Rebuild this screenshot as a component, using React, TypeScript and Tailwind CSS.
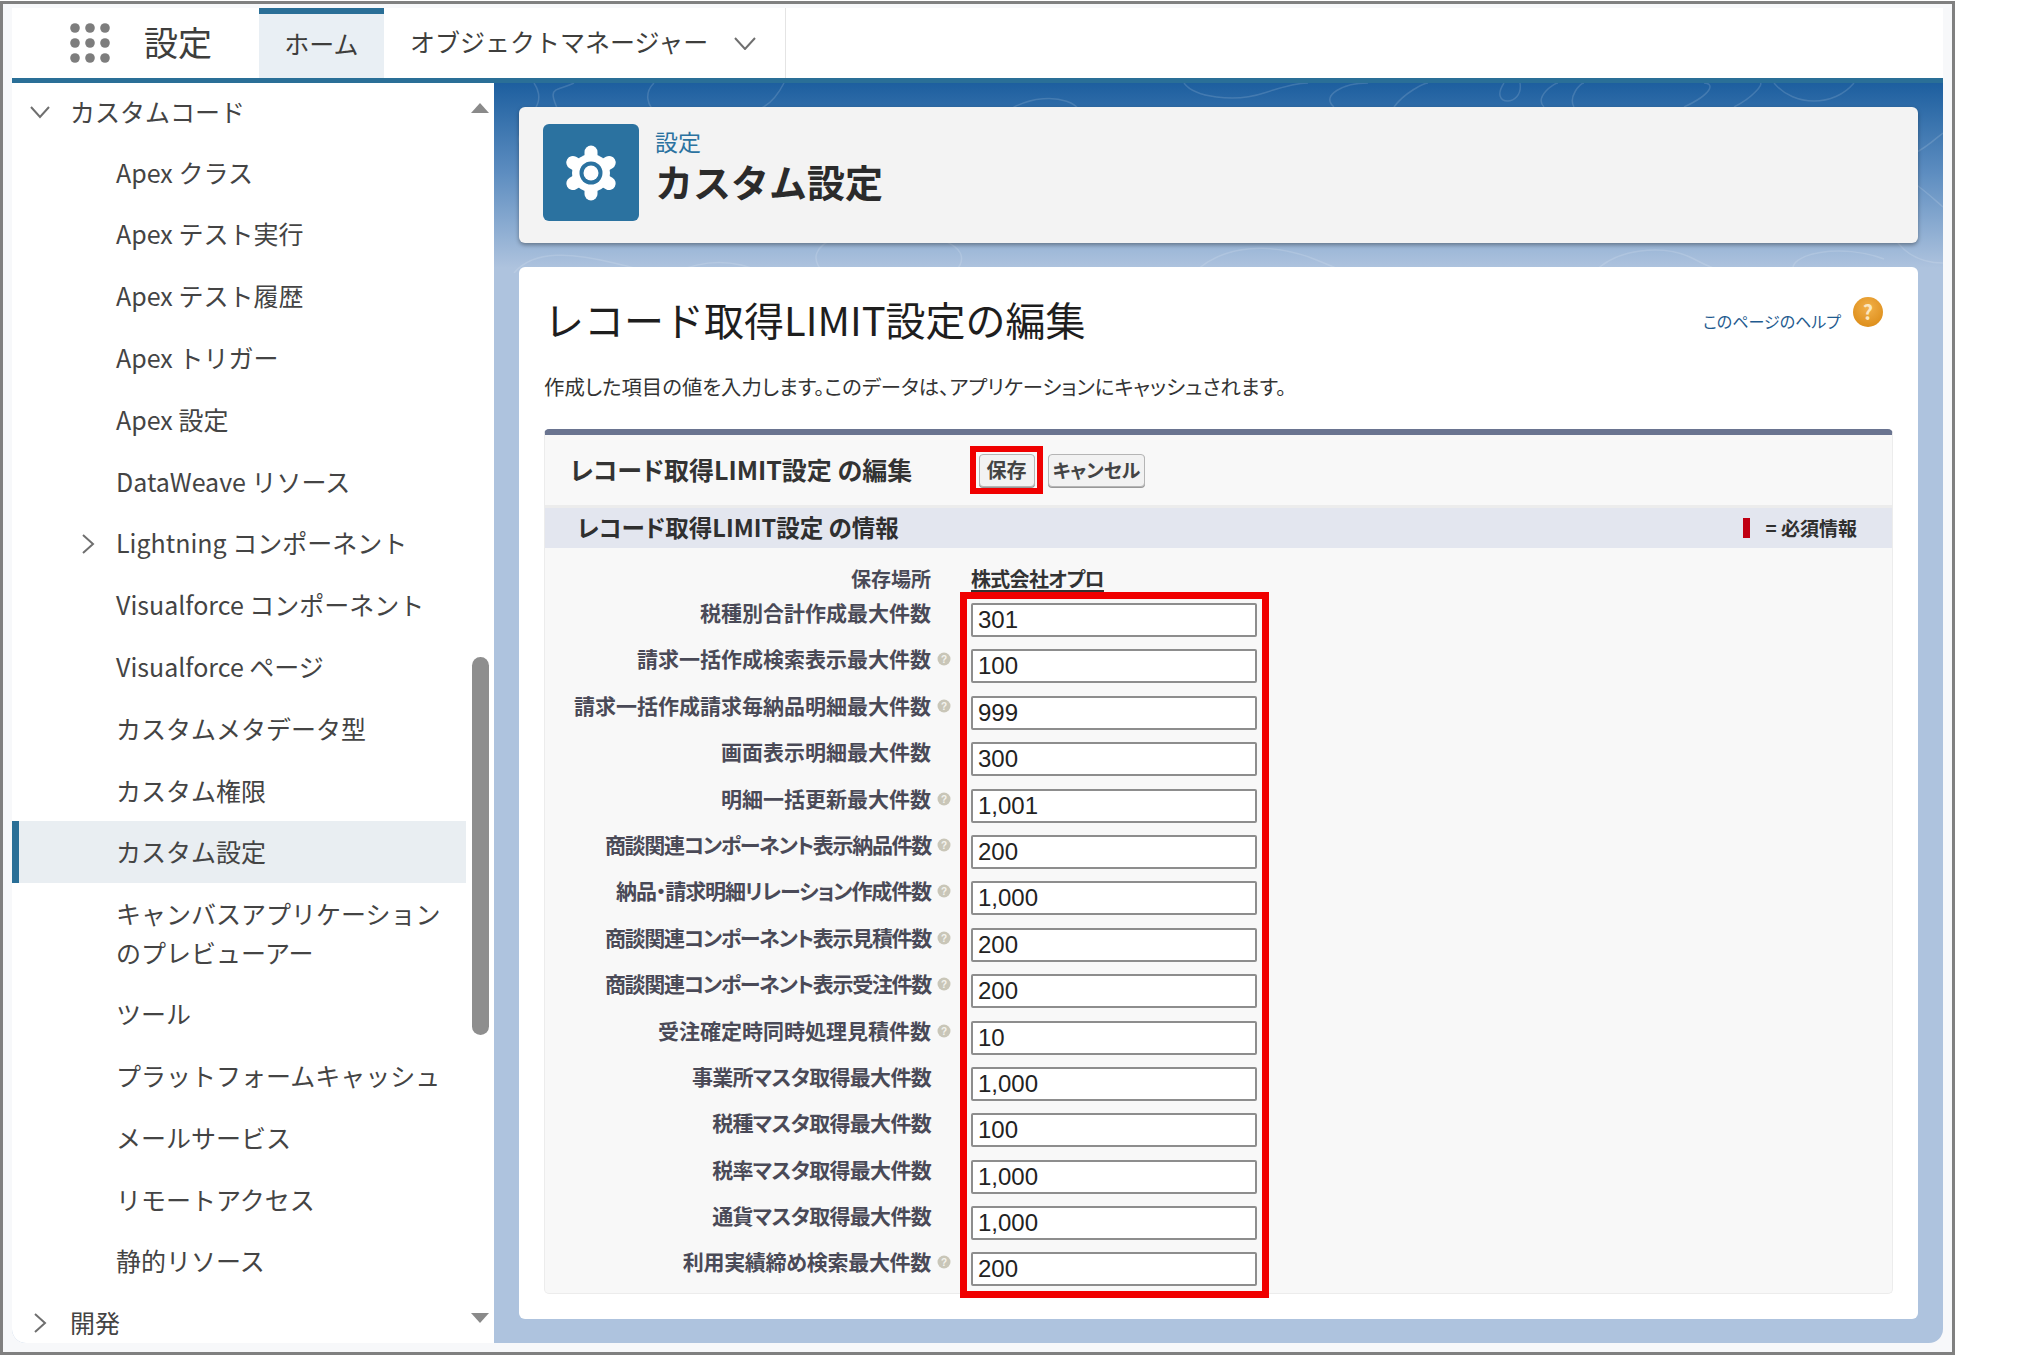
import React from 'react';

const sideItems = [
  'Apex クラス',
  'Apex テスト実行',
  'Apex テスト履歴',
  'Apex トリガー',
  'Apex 設定',
  'DataWeave リソース',
  'Lightning コンポーネント',
  'Visualforce コンポーネント',
  'Visualforce ページ',
  'カスタムメタデータ型',
  'カスタム権限',
];

const sideItemsBelow = ['ツール', 'プラットフォームキャッシュ', 'メールサービス', 'リモートアクセス', '静的リソース'];

const fields = [
  { label: '税種別合計作成最大件数', value: '301', info: false, cls: '' },
  { label: '請求一括作成検索表示最大件数', value: '100', info: true, cls: '' },
  { label: '請求一括作成請求毎納品明細最大件数', value: '999', info: true, cls: '' },
  { label: '画面表示明細最大件数', value: '300', info: false, cls: '' },
  { label: '明細一括更新最大件数', value: '1,001', info: true, cls: '' },
  { label: '商談関連コンポーネント表示納品件数', value: '200', info: true, cls: 'tracking-[-1.3px]' },
  { label: '納品・請求明細リレーション作成件数', value: '1,000', info: true, cls: 'tracking-[-1.1px]' },
  { label: '商談関連コンポーネント表示見積件数', value: '200', info: true, cls: 'tracking-[-1.3px]' },
  { label: '商談関連コンポーネント表示受注件数', value: '200', info: true, cls: 'tracking-[-1.3px]' },
  { label: '受注確定時同時処理見積件数', value: '10', info: true, cls: '' },
  { label: '事業所マスタ取得最大件数', value: '1,000', info: false, cls: 'tracking-[-0.7px]' },
  { label: '税種マスタ取得最大件数', value: '100', info: false, cls: 'tracking-[-0.7px]' },
  { label: '税率マスタ取得最大件数', value: '1,000', info: false, cls: 'tracking-[-0.7px]' },
  { label: '通貨マスタ取得最大件数', value: '1,000', info: false, cls: 'tracking-[-0.7px]' },
  { label: '利用実績締め検索最大件数', value: '200', info: true, cls: 'tracking-[-0.3px]' },
];

function Chevron({ dir, className }: { dir: 'down' | 'right'; className: string }) {
  return (
    <svg viewBox="0 0 20 20" className={className} fill="none" stroke="#6f6f6f" strokeWidth="2">
      {dir === 'down' ? <polyline points="1,5 10,15 19,5" /> : <polyline points="5,1 15,10 5,19" />}
    </svg>
  );
}

function AppGrid() {
  const pos = [5, 20, 35];
  return (
    <svg viewBox="0 0 40 40" className="h-[40px] w-[40px]" fill="#7d7d7d">
      {pos.map((y) => pos.map((x) => <circle key={`${x}-${y}`} cx={x} cy={y} r="4.8" />))}
    </svg>
  );
}

function Gear() {
  const angles = [0, 60, 120, 180, 240, 300];
  return (
    <svg viewBox="-30 -30 60 60" className="h-[60px] w-[60px]">
      <circle r="19" fill="#fff" />
      {angles.map((a) => (
        <line key={a} x1="0" y1="0" x2="0" y2="-21" transform={`rotate(${a})`} stroke="#fff" strokeWidth="13" strokeLinecap="round" />
      ))}
      <circle r="11.5" fill="#2b72a0" />
      <circle r="7.5" fill="#fff" />
    </svg>
  );
}

function InfoDot() {
  return (
    <svg viewBox="0 0 14 14" className="h-[14px] w-[14px]">
      <circle cx="7" cy="7" r="6.5" fill="#c9c6b8" />
      <text x="7" y="10.5" textAnchor="middle" fontSize="10" fontWeight="700" fill="#f4f3ee" fontFamily="Liberation Sans, sans-serif">?</text>
    </svg>
  );
}

function Contours() {
  return (
    <svg viewBox="0 0 1449 190" preserveAspectRatio="none" className="absolute inset-x-0 top-0 h-[190px] w-full" fill="none" stroke="#ffffff" strokeOpacity="0.14" strokeWidth="1.5">
      <path d="M40 0c20 30-30 40-10 70s60 10 40-30S60 10 80 0" />
      <path d="M160 0c-20 20 10 50 60 40s60-20 70-40" />
      <path d="M330 190c-30-30 30-50 90-40s50 30 40 40" />
      <path d="M520 24c40-20 80 0 60 14s-70 0-60-14z" />
      <path d="M690 0c10 14 50 20 80 10s40-10 44-10" />
      <path d="M840 24c-14-12 10-24 34-24M900 24c10-14 30-24 34-24" />
      <path d="M700 190c30-30 80-30 120-14s30 14 30 14" />
      <path d="M1010 0c-16 24 20 24 16 0M1050 24c-10-10 10-24 14-24M1080 24c-6-10 6-24 10-24" />
      <path d="M1190 24c30-14 30-24 20-24M1240 24c20-10 30-24 26-24M1280 0c20 24 60 24 80 0" />
      <path d="M1380 80c40 0 60-24 69-30M1400 130c-10 30 20 50 49 50M1420 100c14 10 24 20 29 24" />
      <path d="M1100 190c20-24 70-30 100-14s40 14 44 14M1300 190c-10-20 50-30 90-14" />
      <path d="M20 190c20-24 60-20 100-10s40 10 60 10M180 190c30-14 60-14 90 0" />
    </svg>
  );
}

function SideRow({ children, active }: { children: React.ReactNode; active?: boolean }) {
  return (
    <div className={`flex h-[61.8px] shrink-0 items-center text-[25px] text-[#444] ${active ? 'border-l-[7px] border-[#2a6f97] bg-[#e9eef2] pl-[97px]' : 'pl-[104px]'}`}>
      {children}
    </div>
  );
}

export default function App() {
  return (
    <div className="h-[1361px] w-[2027px] overflow-hidden bg-white pt-[1px] [font-family:'Noto_Sans_CJK_JP',sans-serif]">
      <div className="flex h-[1354px] w-[1955px] flex-col border-[3px] border-[#808080] bg-[#f7f8fa] pb-[9px] pl-[9px] pr-[9px] pt-[4px]">
        {/* top nav */}
        <div className="flex h-[70px] shrink-0 items-stretch bg-white">
          <div className="flex w-[247px] items-center pl-[58px]">
            <AppGrid />
            <span className="mb-[3px] ml-[34px] text-[34px] text-[#3e3e3c]">設定</span>
          </div>
          <div className="flex w-[125px] items-center justify-center border-t-[6px] border-[#2a6f97] bg-[#e9eff4] pb-[5px] text-[25px] text-[#3e3e3c]">ホーム</div>
          <div className="flex w-[402px] items-center border-r border-[#e4e4e4] pb-[3px] pl-[26px] text-[25px] text-[#3e3e3c]">
            オブジェクトマネージャー
            <svg viewBox="0 0 22 13" className="ml-[26px] mt-[3px] h-[13px] w-[22px]" fill="none" stroke="#6f6f6f" strokeWidth="2">
              <polyline points="1,1 11,12 21,1" />
            </svg>
          </div>
        </div>

        {/* body */}
        <div className="flex min-h-0 flex-1 rounded-b-[14px] border-t-[5px] border-[#2a6f97] bg-[linear-gradient(#1d5f9f_0px,#5d8dc0_90px,#aec3de_185px)]">
          <div className="flex w-[482px] shrink-0 overflow-hidden rounded-bl-[14px] bg-white">
            <div className="flex w-[454px] flex-col">
              <div className="flex h-[58.5px] shrink-0 items-center pl-[18px] text-[25px] text-[#444]">
                <Chevron dir="down" className="mr-[20px] h-[20px] w-[20px]" />
                <span className="mb-[2px]">カスタムコード</span>
              </div>
              {sideItems.map((item) => (
                <SideRow key={item}>
                  {item.startsWith('Lightning') ? (
                    <span className="relative">
                      <span className="absolute -left-[38px] top-[10px]">
                        <Chevron dir="right" className="h-[20px] w-[20px]" />
                      </span>
                      {item}
                    </span>
                  ) : (
                    item
                  )}
                </SideRow>
              ))}
              <SideRow active>カスタム設定</SideRow>
              <div className="flex h-[100px] shrink-0 items-center pl-[104px] text-[25px] leading-[39px] text-[#444]">
                キャンバスアプリケーション
                <br />
                のプレビューアー
              </div>
              {sideItemsBelow.map((item) => (
                <SideRow key={item}>{item}</SideRow>
              ))}
              <div className="flex h-[61.8px] shrink-0 items-center pl-[18px] text-[25px] text-[#444]">
                <Chevron dir="right" className="mr-[20px] h-[20px] w-[20px]" />
                開発
              </div>
            </div>
            <div className="flex w-[28px] flex-col items-center pt-[20px]">
              <svg viewBox="0 0 18 10" className="h-[10px] w-[18px]" fill="#8a8a8a"><polygon points="9,0 18,10 0,10" /></svg>
              <div className="mt-[544px] h-[378px] w-[17px] rounded-full bg-[#8e8e8e]" />
              <svg viewBox="0 0 18 10" className="mt-[278px] h-[10px] w-[18px]" fill="#8a8a8a"><polygon points="0,0 18,0 9,10" /></svg>
            </div>
          </div>

          {/* main */}
          <div className="relative flex min-w-0 flex-1 flex-col gap-[24px] pb-[24px] pl-[25px] pr-[25px] pt-[24px]">
            <Contours />
            <div className="relative flex h-[136px] shrink-0 items-start rounded-[6px] bg-[#f3f3f3] pl-[24px] pt-[17px] shadow-[0_2px_4px_rgba(0,0,0,0.35)]">
              <div className="flex h-[97px] w-[96px] items-center justify-center rounded-[6px] bg-[#2b72a0]">
                <Gear />
              </div>
              <div className="ml-[16px] mt-[3px] flex flex-col">
                <span className="text-[23px] leading-[28px] text-[#2b72a0]">設定</span>
                <span className="text-[38px] font-bold leading-[52px] text-[#2b2b2b]">カスタム設定</span>
              </div>
            </div>

            <div className="relative flex min-h-0 flex-1 flex-col rounded-[6px] bg-white px-[25px] pb-[25px] pt-[30px]">
              <div className="flex items-start justify-between pr-[10px]">
                <h1 className="text-[40px] font-normal leading-[44px] text-[#1e1e1e]">レコード取得LIMIT設定の編集</h1>
                <div className="flex items-start">
                  <span className="mt-[11px] text-[16px] leading-[26px] text-[#1f5b8f] [font-feature-settings:'palt']">このページのヘルプ</span>
                  <div className="ml-[12px] flex h-[30px] w-[30px] items-center justify-center rounded-full bg-[radial-gradient(circle_at_50%_35%,#f2b04a,#d8860f)] text-[20px] font-bold text-[#fbe7c0]">?</div>
                </div>
              </div>
              <p className="mt-[28px] text-[20.4px] leading-[34px] text-[#333] [font-feature-settings:'palt']">作成した項目の値を入力します。このデータは、アプリケーションにキャッシュされます。</p>

              <div className="mt-[26px] flex min-h-0 flex-1 flex-col rounded-[5px] border-x border-b border-t-[6px] border-x-[#ececec] border-b-[#ececec] border-t-[#6a7490] bg-[#f8f8f8] [font-feature-settings:'palt']">
                <div className="flex h-[73px] shrink-0 items-center border-b-[3px] border-[#ececec] pl-[25px]">
                  <h2 className="w-[400px] text-[25px] font-bold text-[#333]">レコード取得LIMIT設定 の編集</h2>
                  <div className="flex h-[48px] w-[73px] items-center justify-center border-[6px] border-[#f00000]">
                    <button className="h-[33px] w-[56px] shrink-0 rounded-[4px] border border-[#b5b5b5] bg-[#f2f2f2] text-[20px] font-bold text-[#444] shadow-[0_1px_0_#999]">保存</button>
                  </div>
                  <button className="ml-[5px] h-[33px] w-[97px] rounded-[4px] border border-[#b5b5b5] bg-[#f2f2f2] text-[19px] font-bold text-[#444] shadow-[0_1px_0_#999]">キャンセル</button>
                </div>
                <div className="flex h-[40px] shrink-0 items-center justify-between bg-[#e3e6ef] pl-[32px] pr-[35px]">
                  <h3 className="text-[23.5px] font-bold text-[#2f2f2f]">レコード取得LIMIT設定 の情報</h3>
                  <div className="flex items-center">
                    <span className="h-[20px] w-[7px] bg-[#c00012]" />
                    <span className="ml-[15px] text-[19px] font-bold text-[#2f2f2f]">= 必須情報</span>
                  </div>
                </div>
                <div className="mt-[16px] flex h-[33px] shrink-0">
                  <div className="w-[386px] text-right text-[20px] font-bold leading-[30px] text-[#4a4a57]">保存場所</div>
                  <div className="ml-[40px] text-[20px] font-bold leading-[30px] tracking-[-0.7px] text-[#333] underline underline-offset-[3px]">株式会社オプロ</div>
                </div>
                <div className="relative">
                  {fields.map((f) => (
                    <div key={f.label} className="flex h-[46.4px]">
                      <div className={`w-[386px] whitespace-nowrap text-right text-[21px] font-bold leading-[30px] text-[#4a4a57] ${f.cls}`}>{f.label}</div>
                      <div className="mt-[9px] w-[40px] pl-[6px]">{f.info && <InfoDot />}</div>
                      <input
                        readOnly
                        value={f.value}
                        className="mt-[6px] h-[34px] w-[286px] rounded-[2px] border-2 border-[#8d8d8d] bg-white pl-[5px] [font-family:'Liberation_Sans',sans-serif] text-[24px] text-[#222]"
                      />
                    </div>
                  ))}
                  <div className="absolute left-[415px] top-[-5px] h-[706px] w-[309px] border-[7px] border-[#f00000]" />
                </div>
              </div>
            </div>
          </div>
        </div>
      </div>
    </div>
  );
}
